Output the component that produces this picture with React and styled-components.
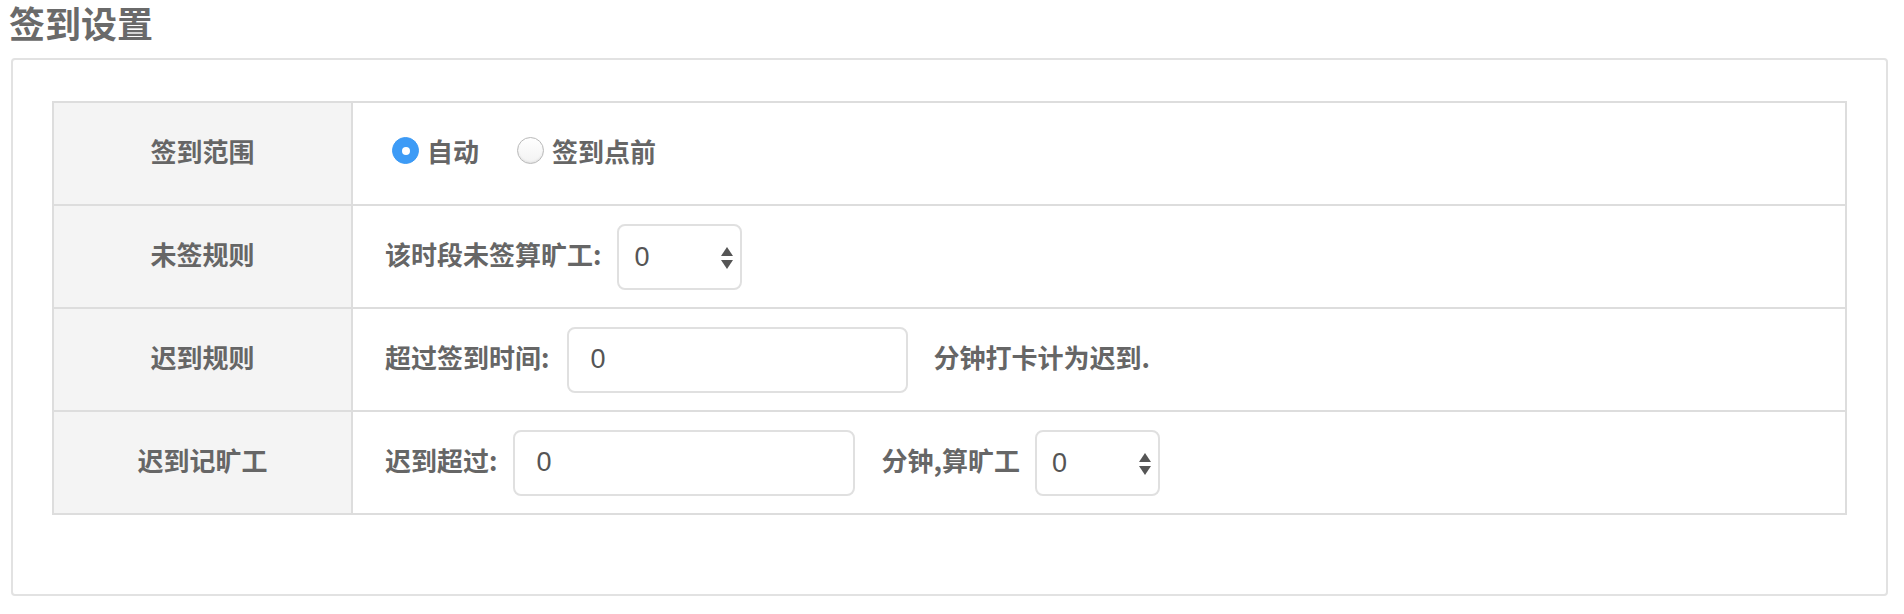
import React from 'react'
import styled, { createGlobalStyle } from 'styled-components'

const Global = createGlobalStyle`
    body {
        margin: 0;
        background: #fff;
        font-family: "Noto Sans CJK SC", "Liberation Sans", sans-serif;
        color: #666;
    }
`

const Title = styled.h2`
    margin: 2px 0 16px 9px;
    font-size: 36px;
    line-height: 40px;
    font-weight: 600;
    color: #6a6a6a;
`
const Panel = styled.div`
    margin: 0 16px 0 11px;
    padding: 41px 39px 79px;
    border: 2px solid #e2e2e2;
    border-radius: 4px;
`
const Table = styled.div`
    border: 2px solid #dddddd;
`
const Row = styled.div`
    display: flex;
    min-height: 101px;
    & + & {
        border-top: 2px solid #dddddd;
    }
`
const Label = styled.div`
    width: 299px;
    flex-shrink: 0;
    box-sizing: border-box;
    padding-bottom: 7px;
    background: #f4f4f4;
    border-right: 2px solid #dddddd;
    display: flex;
    align-items: center;
    justify-content: center;
    font-size: 26px;
    font-weight: 600;
    color: #666;
`
const Value = styled.div`
    flex: 1;
    display: flex;
    align-items: center;
    padding-left: 32px;
    font-size: 26px;
    font-weight: 600;
    color: #666;
`
const Text = styled.span`
    margin-left: ${p => p.$left || 0}px;
    margin-right: ${p => p.$right || 0}px;
    padding-bottom: 6px;
    white-space: nowrap;
`
const RadioLabel = styled.label`
    display: flex;
    align-items: center;
    margin-right: ${p => p.$right || 0}px;
    padding-bottom: 6px;
    cursor: pointer;
`
const Radio = styled.input`
    appearance: none;
    width: 27px;
    height: 27px;
    margin: 0 8px 0 7px;
    border-radius: 50%;
    border: 1px solid #b9b9b9;
    background: linear-gradient(#fff, #f2f2f2);
    box-shadow: inset 0 -1px 2px rgba(0, 0, 0, 0.08);
    box-sizing: border-box;
    position: relative;
    &:checked {
        border-color: #3c9af5;
        background: #3d9bf6;
        box-shadow: none;
    }
    &:checked::after {
        content: "";
        position: absolute;
        left: 50%;
        top: 50%;
        width: 8px;
        height: 8px;
        margin: -4px 0 0 -4px;
        border-radius: 50%;
        background: #fff;
    }
`
const Input = styled.input`
    width: ${p => p.$width}px;
    height: 66px;
    box-sizing: border-box;
    border: 2px solid #e0e0e0;
    border-radius: 8px;
    padding: 0 0 0 21px;
    font-family: "Liberation Sans", sans-serif;
    font-size: 27px;
    color: #555;
    outline: none;
`
const SelectWrap = styled.div`
    position: relative;
    width: 125px;
    height: 66px;
    margin-left: ${p => p.$left || 0}px;
`
const Select = styled.select`
    appearance: none;
    width: 100%;
    height: 100%;
    box-sizing: border-box;
    border: 2px solid #e0e0e0;
    border-radius: 8px;
    background: #fff;
    padding: 0 0 0 15px;
    font-family: "Liberation Sans", sans-serif;
    font-size: 27px;
    color: #555;
    outline: none;
`
const Arrows = styled.svg`
    position: absolute;
    right: 9px;
    top: 23px;
    pointer-events: none;
`

const Spinner = ({ left }) => (
    <SelectWrap $left={left}>
        <Select defaultValue="0">
            <option value="0">0</option>
            <option value="1">1</option>
            <option value="2">2</option>
        </Select>
        <Arrows width="12" height="22" viewBox="0 0 12 22">
            <path d="M6 0 L12 9 L0 9 Z" fill="#555" />
            <path d="M0 13 L12 13 L6 22 Z" fill="#555" />
        </Arrows>
    </SelectWrap>
)

const App = () => {
  return (
    <>
        <Global />
        <Title>签到设置</Title>
        <Panel>
            <Table>
                <Row>
                    <Label>签到范围</Label>
                    <Value>
                        <RadioLabel $right={31}>
                            <Radio type="radio" name="range" defaultChecked />自动
                        </RadioLabel>
                        <RadioLabel>
                            <Radio type="radio" name="range" />签到点前
                        </RadioLabel>
                    </Value>
                </Row>
                <Row>
                    <Label>未签规则</Label>
                    <Value>
                        <Text $right={16}>该时段未签算旷工:</Text>
                        <Spinner />
                    </Value>
                </Row>
                <Row>
                    <Label>迟到规则</Label>
                    <Value>
                        <Text $right={18}>超过签到时间:</Text>
                        <Input $width={341} defaultValue="0" />
                        <Text $left={25}>分钟打卡计为迟到.</Text>
                    </Value>
                </Row>
                <Row>
                    <Label>迟到记旷工</Label>
                    <Value>
                        <Text $right={16}>迟到超过:</Text>
                        <Input $width={342} defaultValue="0" />
                        <Text $left={26} $right={15}>分钟,算旷工</Text>
                        <Spinner />
                    </Value>
                </Row>
            </Table>
        </Panel>
    </>
  )
}

export default App
